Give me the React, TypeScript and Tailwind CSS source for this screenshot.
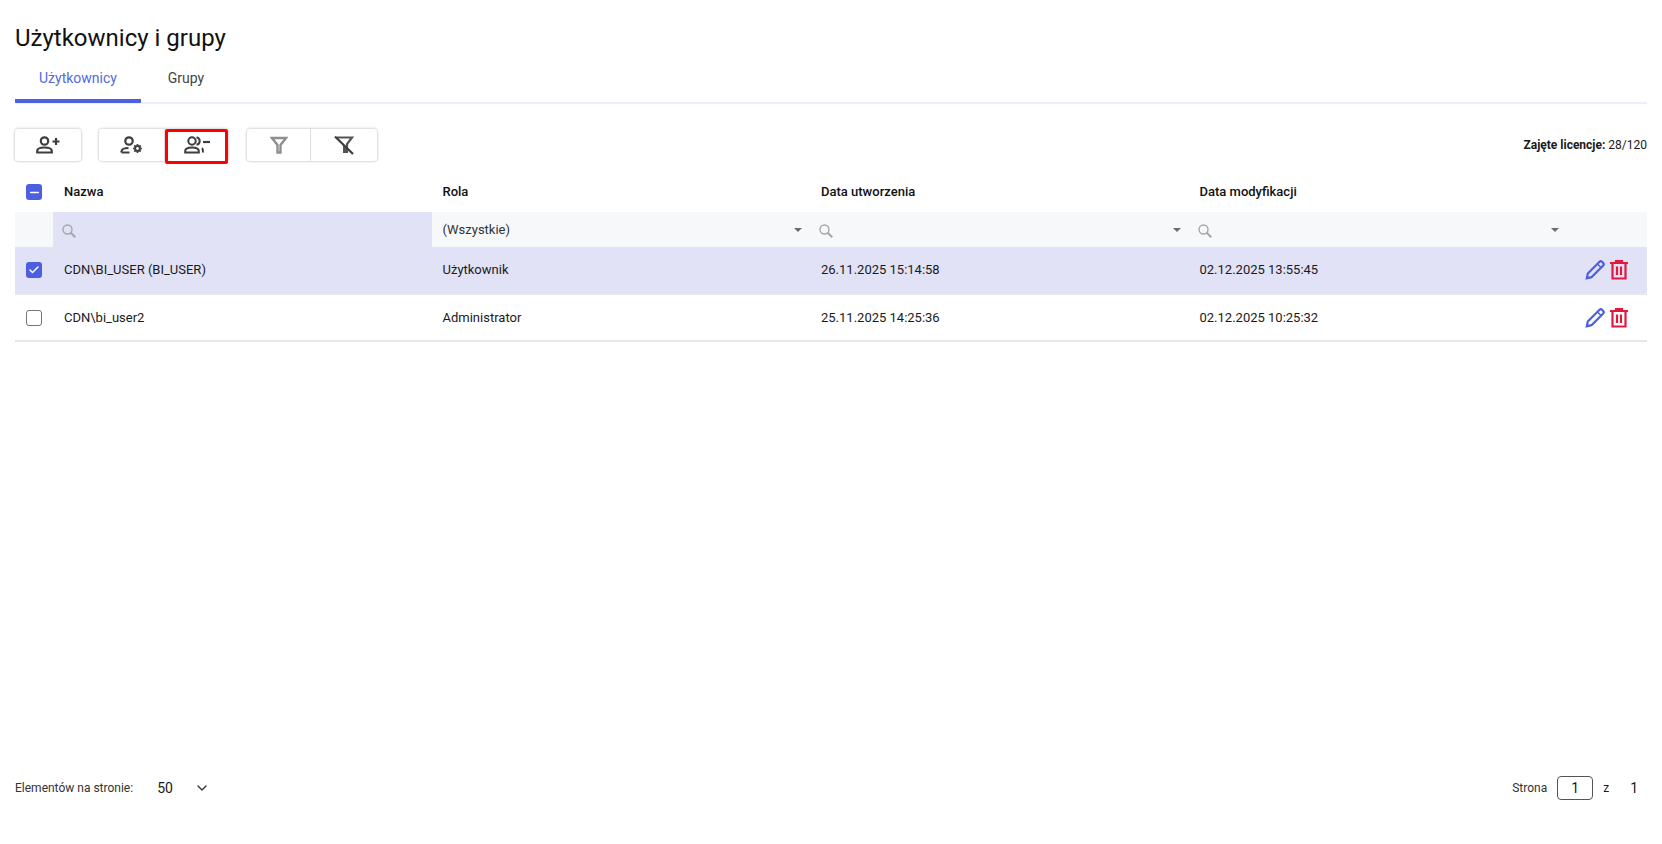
import { Check, ChevronDown, Minus } from "lucide-react";

const columns = ["Nazwa", "Rola", "Data utworzenia", "Data modyfikacji"];

const users = [
  {
    name: "CDN\\BI_USER (BI_USER)",
    role: "Użytkownik",
    created: "26.11.2025 15:14:58",
    modified: "02.12.2025 13:55:45",
    selected: true,
  },
  {
    name: "CDN\\bi_user2",
    role: "Administrator",
    created: "25.11.2025 14:25:36",
    modified: "02.12.2025 10:25:32",
    selected: false,
  },
];

const gridCols = "grid grid-cols-[38px_1fr_1fr_1fr_1fr_80px]";

function UserPlusIcon() {
  return (
    <svg width="24" height="18" viewBox="0 0 24 18" fill="none" stroke="#3d3d3d" strokeWidth="2.200">
      <circle cx="8.500" cy="5" r="3.700" />
      <path d="M1.200 16.500v-1.500c0-2 3-3.500 7.300-3.500s7.300 1.500 7.300 3.500v1.500z" />
      <path d="M16.500 5.500h7M20 2v7" />
    </svg>
  );
}

function UserGearIcon() {
  return (
    <svg width="24" height="18" viewBox="0 0 24 18" fill="none" stroke="#3d3d3d" strokeWidth="2.200">
      <circle cx="9" cy="5" r="3.700" />
      <path d="M1.500 16.500v-1c0-2 3-3.500 7-3.500M1.500 16.500h8" />
      <circle cx="17.500" cy="12.500" r="2.400" strokeWidth="2" />
      <path d="M17.500 8v1.500M17.500 15.500V17M13 12.500h1.500M20.500 12.500H22M14.300 9.300l1 1M19.700 14.700l1 1M20.700 9.300l-1 1M15.300 14.700l-1 1" strokeWidth="1.700" />
    </svg>
  );
}

function UserMinusIcon() {
  return (
    <svg width="26" height="18" viewBox="0 0 26 18" fill="none" stroke="#3d3d3d" strokeWidth="2">
      <circle cx="8" cy="5" r="3.700" />
      <path d="M1.200 16.500v-1.500c0-2 2.800-3.500 6.800-3.500s6.800 1.500 6.800 3.500v1.500z" />
      <path d="M12.500 1.200c2.200.5 3.200 2 3.200 3.800s-1 3.300-3.200 3.800M18 12c.7.700 1 2 1 4.500" />
      <path d="M19 6h7" strokeWidth="2.200" />
    </svg>
  );
}

function FilterIcon() {
  return (
    <svg width="18" height="18" viewBox="0 0 18 18" fill="none" stroke="#8f8f8f" strokeWidth="2.400">
      <path d="M2 2h14l-5.500 7v7.500h-3V9z" />
    </svg>
  );
}

function FilterOffIcon() {
  return (
    <svg width="22" height="20" viewBox="0 0 22 20" fill="none">
      <path d="M4 2.500h15l-5 6.500v9" stroke="#555" strokeWidth="2.200" />
      <path d="M8 7l6 6v5h-4v-7z" fill="#555" />
      <path d="M2 1.500L20 19" stroke="#3d3d3d" strokeWidth="2.200" />
    </svg>
  );
}

function PencilIcon() {
  return (
    <svg width="20" height="20" viewBox="0 0 20 20" fill="none" stroke="#4c5fe0" strokeWidth="2.200">
      <path d="M1.800 18.200l1-4.700L14.500 1.800c.8-.7 1.800-.7 2.500 0l1.200 1.200c.7.700.7 1.700 0 2.500L6.500 17.200z" />
      <path d="M12.500 4l3.500 3.500" strokeWidth="1.500" />
    </svg>
  );
}

function TrashIcon() {
  return (
    <svg width="18" height="20" viewBox="0 0 18 20" fill="none" stroke="#e0193f" strokeWidth="2.200">
      <path d="M0 3h18M6 3V1h6v2M2.500 3v15.500h13V3" />
      <path d="M7 6.500v8.500M11 6.500v8.500" />
    </svg>
  );
}

function SearchIcon() {
  return (
    <svg width="14" height="14" viewBox="0 0 14 14" fill="none" stroke="#a6a6a6" className="mt-[3px]">
      <circle cx="5.500" cy="5.500" r="4.500" strokeWidth="1.400" />
      <path d="M8.800 8.800l4.400 4.400" strokeWidth="2" />
    </svg>
  );
}

function Caret() {
  return <span className="w-0 h-0 border-x-[4px] border-x-transparent border-t-[4px] border-t-[#6b6b6b]" />;
}

function ToolGroup({ children }: { children: React.ReactNode }) {
  return (
    <div className="flex h-8 items-start bg-white rounded-[3px] shadow-[0_0_3px_rgba(0,0,0,0.32)] divide-x divide-[#ddd]">
      {children}
    </div>
  );
}

export default function App() {
  return (
    <div className="h-[844px] flex flex-col bg-white px-[15px] text-[13px] text-[#1a1a1a] font-['Roboto',sans-serif]">
      <h1 className="pt-[23px] text-[24px] leading-[30px] text-[#111]">Użytkownicy i grupy</h1>

      <div className="flex h-[51px] border-b-2 border-[#eeeefa]">
        <div className="w-[126px] h-[50px] border-b-4 border-[#4c5fe0] rounded-b-[1px] pt-[15px] text-center text-[14px] text-[#5468e0]">Użytkownicy</div>
        <div className="w-[90px] pt-[15px] text-center text-[14px] text-[#444]">Grupy</div>
      </div>

      <div className="mt-[25px] flex items-center">
        <ToolGroup>
          <button className="flex items-center justify-center w-[66px] h-8"><UserPlusIcon /></button>
        </ToolGroup>
        <div className="ml-[18px]">
          <ToolGroup>
            <button className="flex items-center justify-center w-[66px] h-8"><UserGearIcon /></button>
            <button className="flex items-center justify-center w-[63px] h-[35px] pb-[3px] -mb-[3px] border-[3px] !border-[#f00] rounded-[2px]"><UserMinusIcon /></button>
          </ToolGroup>
        </div>
        <div className="ml-[19px]">
          <ToolGroup>
            <button className="flex items-center justify-center w-[64px] h-8"><FilterIcon /></button>
            <button className="flex items-center justify-center w-[66px] h-8"><FilterOffIcon /></button>
          </ToolGroup>
        </div>
        <div className="ml-auto text-[12px]">
          <span className="font-bold">Zajęte licencje:</span> 28/120
        </div>
      </div>

      <div className={`${gridCols} h-[51px] pt-[11px] items-center font-medium text-[#111]`}>
        <div className="pl-[11px]">
          <span className="flex items-center justify-center w-4 h-4 rounded-[3px] bg-[#4c5fe0]">
            <Minus size={13} strokeWidth={3} className="text-white" />
          </span>
        </div>
        {columns.map((col) => (
          <div key={col} className="pl-[11px]">{col}</div>
        ))}
      </div>

      <div className={`${gridCols} h-[35px] items-center bg-[#f7f8fa]`}>
        <div />
        <div className="h-full flex items-center pl-[9px] bg-[#e2e2f7]"><SearchIcon /></div>
        <div className="h-full flex items-center justify-between pl-[11px] pr-[8px]">
          <span className="pt-px text-[#333]">(Wszystkie)</span>
          <Caret />
        </div>
        <div className="h-full flex items-center justify-between pl-[9px] pr-[8px]"><SearchIcon /><Caret /></div>
        <div className="h-full flex items-center justify-between pl-[9px] pr-[8px]"><SearchIcon /><Caret /></div>
        <div />
      </div>

      {users.map((user, i) => (
        <div
          key={user.name}
          className={`${gridCols} ${i === 0 ? "h-[48px]" : "h-[47px]"} items-center border-b-2 border-[#e6e6ee] ${user.selected ? "bg-[#e2e2f7]" : "bg-white"}`}
        >
          <div className="pl-[11px]">
            {user.selected ? (
              <span className="flex items-center justify-center w-4 h-4 rounded-[3px] bg-[#4c5fe0]">
                <Check size={12} strokeWidth={3} className="text-white" />
              </span>
            ) : (
              <span className="block w-4 h-4 rounded-[3px] border border-[#757575] bg-white" />
            )}
          </div>
          <div className="pl-[11px]">{user.name}</div>
          <div className="pl-[11px]">{user.role}</div>
          <div className="pl-[11px]">{user.created}</div>
          <div className="pl-[11px]">{user.modified}</div>
          <div className="flex items-center justify-end gap-[5px] pr-[19px]">
            <PencilIcon />
            <TrashIcon />
          </div>
        </div>
      ))}

      <div className="mt-auto mb-[46px] flex items-center h-[20px]">
        <span className="text-[12px] text-[#333]">Elementów na stronie:</span>
        <span className="ml-6 text-[14px]">50</span>
        <ChevronDown size={16} strokeWidth={2} className="ml-[21px] text-[#333]" />
        <span className="ml-auto text-[12px] text-[#333]">Strona</span>
        <span className="ml-[10px] w-[36px] h-6 flex items-center justify-center rounded-[4px] border border-[#555] text-[14px]">1</span>
        <span className="ml-[10px] text-[12px]">z</span>
        <span className="ml-[21px] mr-[9px] text-[14px]">1</span>
      </div>
    </div>
  );
}
